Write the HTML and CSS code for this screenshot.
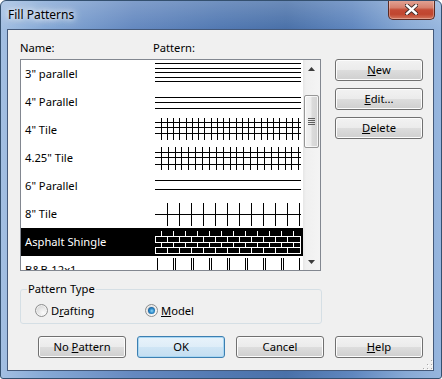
FILE: index.html
```html
<!DOCTYPE html>
<html>
<head>
<meta charset="utf-8">
<title>Fill Patterns</title>
<link rel="stylesheet" href="styles.css">
</head>
<body>
<div class="window">
  <div class="titlebar">
    <span class="title">Fill Patterns</span>
    <div class="close">
      <svg width="13" height="11" viewBox="0 0 13 11">
        <path d="M2 1.5L11 9.5M11 1.5L2 9.5" stroke="#3b2a28" stroke-width="4.2" stroke-linecap="square" fill="none"/>
        <path d="M2 1.5L11 9.5M11 1.5L2 9.5" stroke="#fff" stroke-width="2.4" stroke-linecap="square" fill="none"/>
      </svg>
    </div>
  </div>
  <div class="client">
    <div class="main">
      <div class="left">
        <div class="headers"><span class="h-name">Name:</span><span>Pattern:</span></div>
        <div class="listbox">
          <div class="rows">
            <div class="row"><span class="name">3" parallel</span>
              <svg class="pat" viewBox="0 0 146 28" shape-rendering="crispEdges"><path d="M0 3.5H146M0 8.5H146M0 12.5H146M0 17.5H146M0 21.5H146"/></svg></div>
            <div class="row"><span class="name">4" Parallel</span>
              <svg class="pat" viewBox="0 0 146 28" shape-rendering="crispEdges"><path d="M0 9.5H146M0 14.5H146M0 20.5H146"/></svg></div>
            <div class="row"><span class="name">4" Tile</span>
              <svg class="pat" viewBox="0 0 146 28" shape-rendering="crispEdges"><path d="M0 6.5H146M0 11.5H146M0 17.5H146M6.5 2V24M12.5 2V24M18.5 2V24M24.5 2V24M31.5 2V24M37.5 2V24M43.5 2V24M49.5 2V24M56.5 2V24M62.5 2V24M68.5 2V24M74.5 2V24M81.5 2V24M87.5 2V24M93.5 2V24M99.5 2V24M106.5 2V24M112.5 2V24M118.5 2V24M124.5 2V24M131.5 2V24M137.5 2V24M143.5 2V24"/></svg></div>
            <div class="row"><span class="name">4.25" Tile</span>
              <svg class="pat" viewBox="0 0 146 28" shape-rendering="crispEdges"><path d="M0 8.5H146M0 13.5H146M0 20.5H146M6.5 3V26M13.5 3V26M20.5 3V26M26.5 3V26M33.5 3V26M40.5 3V26M47.5 3V26M54.5 3V26M61.5 3V26M68.5 3V26M75.5 3V26M81.5 3V26M88.5 3V26M95.5 3V26M102.5 3V26M109.5 3V26M116.5 3V26M123.5 3V26M130.5 3V26M136.5 3V26M143.5 3V26"/></svg></div>
            <div class="row"><span class="name">6" Parallel</span>
              <svg class="pat" viewBox="0 0 146 28" shape-rendering="crispEdges"><path d="M0 8.5H146M0 17.5H146"/></svg></div>
            <div class="row"><span class="name">8" Tile</span>
              <svg class="pat" viewBox="0 0 146 28" shape-rendering="crispEdges"><path d="M0 14.5H146M12.5 3V26M24.5 3V26M36.5 3V26M48.5 3V26M60.5 3V26M72.5 3V26M84.5 3V26M96.5 3V26M108.5 3V26M120.5 3V26M132.5 3V26M144.5 3V26"/></svg></div>
            <div class="row sel"><span class="name">Asphalt Shingle</span>
              <svg class="pat white" viewBox="0 0 146 28" shape-rendering="crispEdges"><path d="M0 8.5H146M0 14.5H146M0 19.5H146M0 25.5H146M6.5 3V8M18.5 3V8M30.5 3V8M42.5 3V8M54.5 3V8M66.5 3V8M78.5 3V8M90.5 3V8M102.5 3V8M114.5 3V8M126.5 3V8M138.5 3V8M0.5 8V14M12.5 8V14M24.5 8V14M36.5 8V14M48.5 8V14M60.5 8V14M72.5 8V14M84.5 8V14M96.5 8V14M108.5 8V14M120.5 8V14M132.5 8V14M145.5 8V26M6.5 14V19M18.5 14V19M30.5 14V19M42.5 14V19M54.5 14V19M66.5 14V19M78.5 14V19M90.5 14V19M102.5 14V19M114.5 14V19M126.5 14V19M138.5 14V19M0.5 19V25M12.5 19V25M24.5 19V25M36.5 19V25M48.5 19V25M60.5 19V25M72.5 19V25M84.5 19V25M96.5 19V25M108.5 19V25M120.5 19V25M132.5 19V25"/></svg></div>
            <div class="row"><span class="name">B&amp;B-12x1</span>
              <svg class="pat" viewBox="0 0 146 28" shape-rendering="crispEdges"><path d="M2.5 2V28M18.5 2V28M20.5 2V28M36.5 2V28M38.5 2V28M54.5 2V28M56.5 2V28M72.5 2V28M74.5 2V28M90.5 2V28M92.5 2V28M108.5 2V28M110.5 2V28M126.5 2V28M128.5 2V28M144.5 2V28"/></svg></div>
          </div>
          <div class="scrollbar">
            <div class="sb-btn">
              <svg width="7" height="4" viewBox="0 0 7 4"><path d="M3.5 0L7 4H0Z" fill="#3c3c3c"/></svg>
            </div>
            <div class="sb-track">
              <div class="thumb">
                <svg width="7" height="7" viewBox="0 0 7 7" shape-rendering="crispEdges"><path d="M0 0.5H7M0 2.5H7M0 4.5H7M0 6.5H7" stroke="#5e5e5e"/></svg>
              </div>
            </div>
            <div class="sb-btn">
              <svg width="7" height="4" viewBox="0 0 7 4"><path d="M0 0H7L3.5 4Z" fill="#3c3c3c"/></svg>
            </div>
          </div>
        </div>
        <fieldset class="group">
          <legend>Pattern Type</legend>
          <div class="radios">
            <div class="radio first"><span class="circle"></span><span>D<u>r</u>afting</span></div>
            <div class="radio"><span class="circle on"></span><span><u>M</u>odel</span></div>
          </div>
        </fieldset>
      </div>
      <div class="side">
        <button class="btn"><span><u>N</u>ew</span></button>
        <button class="btn"><span><u>E</u>dit...</span></button>
        <button class="btn"><span><u>D</u>elete</span></button>
      </div>
    </div>
    <div class="bottom">
      <button class="btn"><span>No <u>P</u>attern</span></button>
      <button class="btn default"><span>OK</span></button>
      <button class="btn"><span>Cancel</span></button>
      <button class="btn"><span><u>H</u>elp</span></button>
    </div>
    <svg class="grip" width="10" height="10" viewBox="0 0 10 10" shape-rendering="crispEdges">
      <g fill="#fff"><rect x="9" y="1" width="1" height="1"/><rect x="9" y="5" width="1" height="1"/><rect x="5" y="5" width="1" height="1"/><rect x="9" y="9" width="1" height="1"/><rect x="5" y="9" width="1" height="1"/><rect x="1" y="9" width="1" height="1"/></g>
      <g fill="#a8a8a8"><rect x="8" y="0" width="1" height="1"/><rect x="8" y="4" width="1" height="1"/><rect x="4" y="4" width="1" height="1"/><rect x="8" y="8" width="1" height="1"/><rect x="4" y="8" width="1" height="1"/><rect x="0" y="8" width="1" height="1"/></g>
    </svg>
  </div>
</div>
</body>
</html>
```
FILE: styles.css
```css
* { box-sizing: border-box; }
html, body { margin: 0; padding: 0; }
body {
  font-family: "Noto Sans", "Open Sans", sans-serif;
  font-size: 11.2px;
  color: #000;
  background: #fff;
}
u { text-decoration: underline; text-underline-offset: 1px; }

.window {
  width: 442px;
  height: 379px;
  border: 1px solid #34506f;
  border-radius: 6px 6px 3px 3px;
  overflow: hidden;
  display: flex;
  flex-direction: column;
  background:
    linear-gradient(180deg, rgba(255,255,255,0.18) 0, rgba(255,255,255,0) 28px),
    linear-gradient(90deg, #a3bfe2 0%, #86a9d6 10%, #6589c0 30%, #5279b2 50%, #4a71a9 65%, #6087bf 80%, #87a9d5 92%, #97b6de 100%);
}

.titlebar {
  height: 28px;
  flex: none;
  display: flex;
  align-items: center;
  padding-left: 7px;
}
.title {
  font-size: 12px;
  line-height: 16px;
  text-shadow: 0 0 8px #fff, 0 0 5px rgba(255,255,255,0.9), 0 0 12px rgba(255,255,255,0.7);
}
.close {
  margin-left: auto;
  margin-right: 6px;
  margin-top: -1px;
  align-self: flex-start;
  width: 47px;
  height: 20px;
  border: 1px solid #5a2a22;
  border-top: none;
  border-radius: 0 0 5px 5px;
  background: linear-gradient(180deg, #e3a698 0%, #d6806d 40%, #c44b35 52%, #c0462f 75%, #d3765c 100%);
  box-shadow: inset 0 0 0 1px rgba(255,255,255,0.3);
  display: flex;
  align-items: center;
  justify-content: center;
}
.close svg { display: block; }

.client {
  position: relative;
  flex: none;
  height: 342px;
  margin: 0 7px 0 6px;
  border: 1px solid #44597a;
  background: #f0f0f0;
  padding: 11px 10px 0 12px;
}

.main { display: flex; gap: 13px; }
.left { width: 302px; flex: none; }

.headers {
  display: flex;
  height: 14px;
  line-height: 14px;
  margin-bottom: 4px;
  color: #000;
}
.h-name { width: 133px; }

.listbox {
  width: 301px;
  height: 212px;
  border: 1px solid #828790;
  background: #fff;
  display: flex;
}
.rows { flex: 1; overflow: hidden; }
.row {
  height: 28px;
  display: flex;
  align-items: center;
}
.row .name {
  width: 134px;
  flex: none;
  padding-left: 4px;
  white-space: nowrap;
  line-height: 14px;
  margin-top: -1px;
}
.row.sel { background: #000; color: #fff; }
.pat { width: 146px; height: 28px; flex: none; display: block; }
.pat path { stroke: #000; stroke-width: 1; fill: none; }
.pat.white path { stroke: #fff; }

.scrollbar {
  width: 17px;
  flex: none;
  display: flex;
  flex-direction: column;
  background: linear-gradient(90deg, #e6e6e6 0, #f0f0f0 3px, #f4f4f4 100%);
}
.sb-btn {
  height: 17px;
  flex: none;
  display: flex;
  align-items: center;
  justify-content: center;
}
.sb-btn svg { display: block; }
.sb-track { flex: 1; }
.thumb {
  margin: 18px 1px 0 1px;
  height: 53px;
  border: 1px solid #979797;
  border-radius: 2px;
  background: linear-gradient(90deg, #f3f3f3 0%, #ececec 45%, #dbdbdb 55%, #d4d4d4 100%);
  box-shadow: inset 0 0 0 1px rgba(255,255,255,0.7);
  display: flex;
  align-items: center;
  justify-content: center;
}
.thumb svg { display: block; }

.group {
  margin: 11px 0 0 0;
  padding: 0 6px 6px 6px;
  width: 302px;
  min-width: 0;
  border: 1px solid #d5dfe5;
  border-radius: 3px;
}
.group legend {
  padding: 0 1px;
  line-height: 14px;
}
.radios {
  display: flex;
  align-items: center;
  height: 13px;
  margin: 8px 0 0 8px;
}
.radio {
  display: flex;
  align-items: center;
  gap: 3px;
  line-height: 14px;
}
.radio.first { width: 110px; }
.circle {
  position: relative;
  width: 13px;
  height: 13px;
  flex: none;
  border-radius: 50%;
  border: 1px solid #8e8f8f;
  background: radial-gradient(circle at 65% 70%, #fbfbfb 0, #e6e6e6 45%, #c9c9c9 100%);
  box-shadow: inset 0 0 0 1px rgba(255,255,255,0.6);
}
.circle.on::after {
  content: "";
  position: absolute;
  left: 2px;
  top: 2px;
  width: 7px;
  height: 7px;
  border-radius: 50%;
  background: radial-gradient(circle at 55% 55%, #8fd6f7 0, #2f8ccb 40%, #144f86 80%, #0d3a66 100%);
}

.side {
  width: 88px;
  flex: none;
  display: flex;
  flex-direction: column;
  gap: 7px;
  margin-top: 18px;
}

.btn {
  width: 88px;
  height: 22px;
  padding: 0;
  margin: 0;
  font: inherit;
  color: #000;
  border: 1px solid #707070;
  border-radius: 3px;
  background: linear-gradient(180deg, #f2f2f2 0%, #ebebeb 50%, #dddddd 51%, #cfcfcf 100%);
  box-shadow: inset 0 0 0 1px #fcfcfc;
  display: flex;
  align-items: center;
  justify-content: center;
  line-height: 14px;
}
.btn.default {
  border-color: #3c7fb1;
  background: linear-gradient(180deg, #e8f3fb 0%, #deedf8 50%, #cfe5f5 51%, #c4def1 100%);
  box-shadow: inset 0 0 0 1px #a9d7f3;
}

.bottom {
  display: flex;
  justify-content: flex-end;
  gap: 11px;
  margin-top: 12px;
}

.grip {
  position: absolute;
  right: 0;
  bottom: 0;
  display: block;
}
```
